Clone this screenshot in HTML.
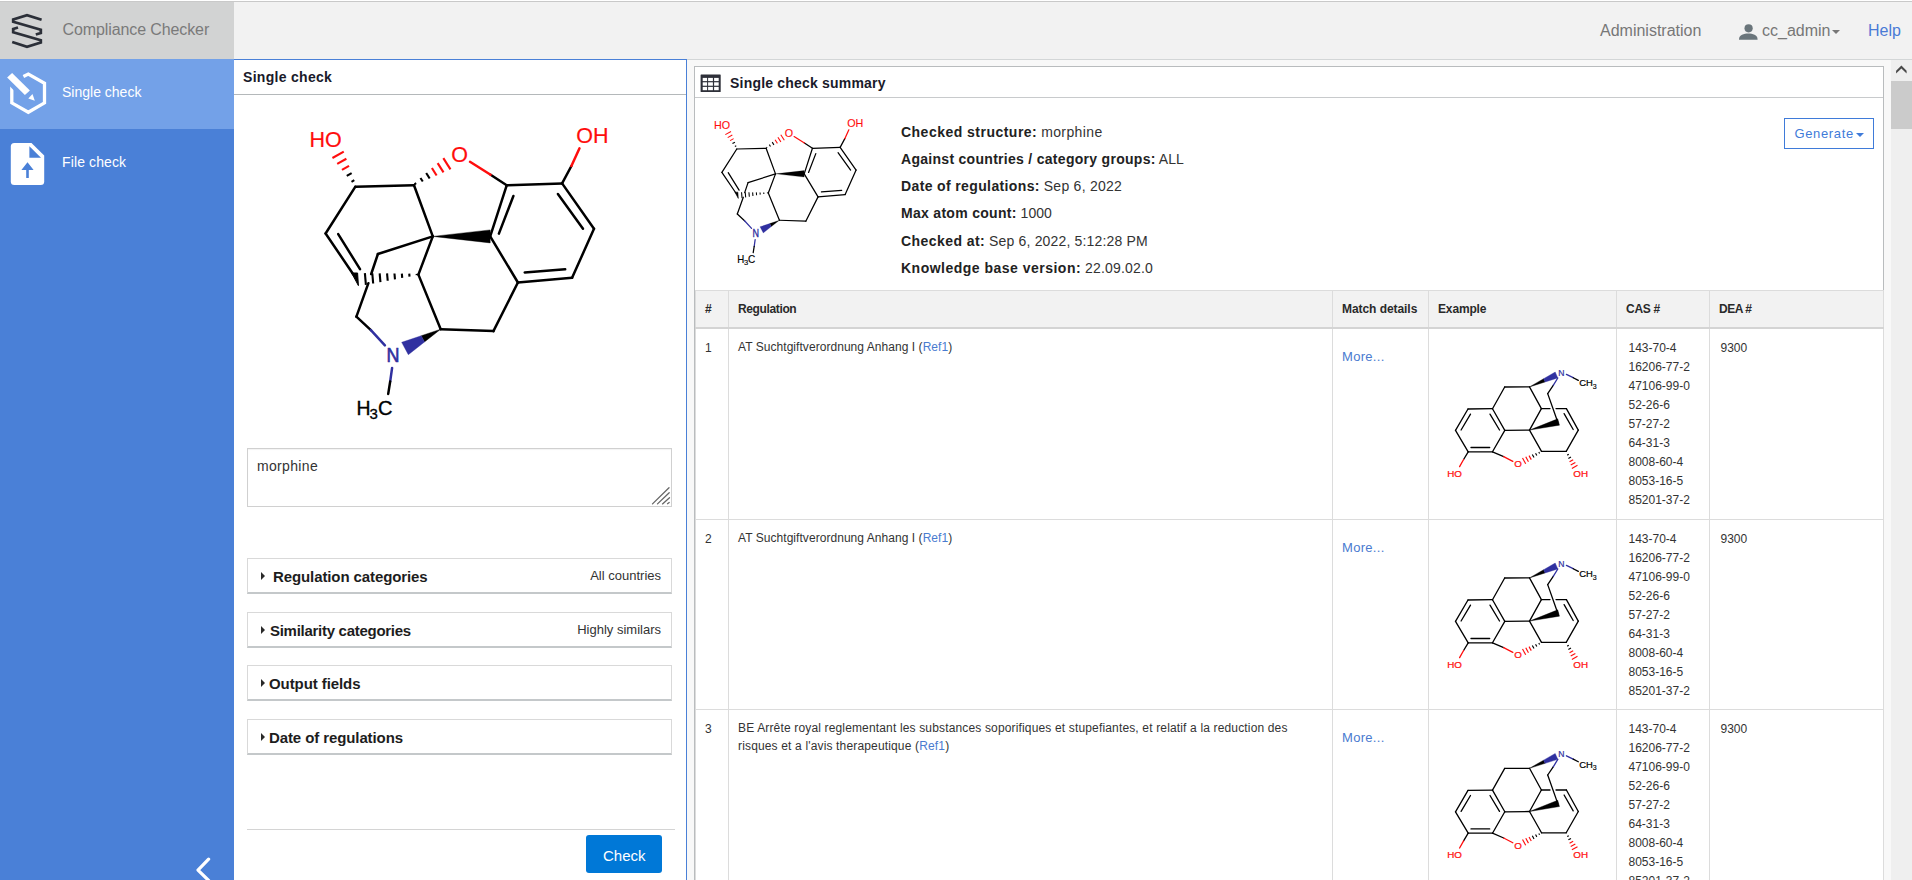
<!DOCTYPE html>
<html><head><meta charset="utf-8">
<style>
*{box-sizing:border-box;margin:0;padding:0}
html,body{width:1912px;height:880px;overflow:hidden;background:#fff;font-family:"Liberation Sans",sans-serif;color:#222}
.a{position:absolute;white-space:nowrap}
#topline{position:absolute;left:0;top:1px;width:1912px;height:1px;background:#c9c9c9}
#header{position:absolute;left:0;top:2px;width:1912px;height:57px;background:#f2f2f2}
#brand{position:absolute;left:0;top:2px;width:234px;height:57px;background:#d2d3d3}
#sidebar{position:absolute;left:0;top:59px;width:234px;height:821px;background:#4a80d7}
.navitem{position:absolute;left:0;width:234px;height:70px}
.navitem.active{background:#73a1e8}
.navitem .t{position:absolute;left:62px;font-size:14px;color:#fff;white-space:nowrap}
#leftpanel{position:absolute;left:234px;top:59px;width:453px;height:821px;border-top:1px solid #4a80d7;border-right:1px solid #4a80d7;background:#fff}
#scroll{position:absolute;left:1891px;top:60px;width:21px;height:820px;background:#efefef}
.acc{position:absolute;left:247px;width:425px;height:36px;border:1px solid #d9d9d9;border-bottom:2px solid #c4c8ca;background:#fff}
.acc .h{position:absolute;top:8.5px;font-size:15px;font-weight:bold;color:#1d1d1d}
.acc .r{position:absolute;right:10px;top:9.2px;font-size:13px;color:#333}
.acc .tri{position:absolute;left:13.2px;top:12.8px;width:0;height:0;border-top:4px solid transparent;border-bottom:4px solid transparent;border-left:4.3px solid #2a2a2a}
.prop{position:absolute;left:901px;font-size:14px;color:#333;white-space:nowrap}
.prop b{color:#222}
table{position:absolute;left:695px;top:290px;border-collapse:collapse;font-size:12px;color:#333}
th{background:#f2f2f2;font-weight:bold;text-align:left;height:37px;border:1px solid #dcdcdc;border-bottom:2px solid #d4d4d4;padding:0 9px;color:#2a2a2a}
td{vertical-align:top;border:1px solid #dcdcdc;padding:10px 9px 0 9px;line-height:18px}
td.rg{padding-top:9px}
td.md{padding-top:19px;font-size:13px}
.lnk{color:#4a7bd0}
td.md .lnk{letter-spacing:0.3px}
.cas{line-height:19px;padding-left:11.5px}
td.dea{padding-left:10.5px}
</style></head>
<body>
<div id="topline"></div>
<div id="header">
  <div class="a" style="left:1600px;top:20px;font-size:16px;color:#777">Administration</div>
  <svg class="a" style="left:1736px;top:18px" width="24" height="22" viewBox="0 0 24 22">
    <circle cx="12.6" cy="8.3" r="4.1" fill="#6a757b"/>
    <path d="M3,19.5 C3,15 8,13.6 12.3,13.6 C16.6,13.6 21.6,15 21.6,19.5 L21.6,19.8 L3,19.8 Z" fill="#6a757b"/>
  </svg>
  <div class="a" style="left:1762px;top:20px;font-size:16px;color:#777">cc_admin</div>
  <div class="a" style="left:1832.3px;top:28.3px;width:0;height:0;border-left:4px solid transparent;border-right:4px solid transparent;border-top:4.5px solid #777"></div>
  <div class="a" style="left:1868px;top:20px;font-size:16px;color:#4a7bd6">Help</div>
</div>
<div id="brand">
  <svg class="a" style="left:0;top:-2px" width="60" height="60" viewBox="0 0 60 60">
    <g fill="none" stroke="#2b2f38" stroke-width="2.75" stroke-linejoin="miter">
      <path d="M41.6,19.8 L27,15.2 L13.2,19.5 L13.2,21.8 L40.8,29.8 L40.8,33 L35.8,34.5"/>
      <path d="M18,27.5 L13.2,29 L13.2,32.3 L40.8,40.3 L40.8,42.5 L27,46.8 L12.2,42"/>
    </g>
  </svg>
  <div class="a" style="left:62.6px;top:18.8px;font-size:16px;color:#7a7a7a;letter-spacing:-0.11px">Compliance Checker</div>
</div>
<div id="sidebar">
  <div class="navitem active" style="top:0">
    <svg class="a" style="left:0;top:0" width="60" height="69" viewBox="0 59 60 69">
      <defs><clipPath id="hexclip"><polygon points="16,59 60,59 60,128 0,128 0,76.5 16,92.5"/></clipPath></defs>
      <g fill="none" stroke="#fff" stroke-width="3.3" stroke-linejoin="miter" clip-path="url(#hexclip)">
        <path d="M23.4,76.4 L28.3,74 L44.5,83.3 L44.5,102.9 L28.3,112.3 L11.8,102.9 L11.8,84"/>
      </g>
      <path d="M7.14,77.58 L12.1,72.9 L29.9,90.4 L24.9,95.1 Z" fill="#fff"/>
      <path d="M28.3,98.5 L32.5,94 L34.8,100.8 Z" fill="#fff"/>
    </svg>
    <div class="t" style="top:25px">Single check</div>
  </div>
  <div class="navitem" style="top:70px">
    <svg class="a" style="left:0;top:-1px" width="60" height="69" viewBox="0 128 60 69">
      <path d="M14.3,143 L31.5,143 L44.2,155.6 L44.2,181.5 Q44.2,185 40.7,185 L14.3,185 Q10.8,185 10.8,181.5 L10.8,146.5 Q10.8,143 14.3,143 Z" fill="#fff"/>
      <path d="M29.4,146.3 L29.4,157.8 L41,157.8 Z" fill="#4a80d7"/>
      <path d="M21.4,170 L27.5,162.2 L33.6,170 L28.8,170 L28.8,178 L26.2,178 L26.2,170 Z" fill="#4a80d7"/>
    </svg>
    <div class="t" style="top:25px;letter-spacing:0.12px">File check</div>
  </div>
  <svg class="a" style="left:190px;top:795px" width="30" height="30" viewBox="0 854 30 26">
  </svg>
</div>
<svg class="a" style="left:0;top:0" width="234" height="880" viewBox="0 0 234 880">
  <path d="M208.6,859.2 L198,870.1 L208.6,880.5" fill="none" stroke="#fff" stroke-width="3.2" stroke-linecap="round" stroke-linejoin="round"/>
</svg>

<div class="a" style="left:234px;top:59px;width:1678px;height:1px;background:#d3d6d7"></div>
<div class="a" style="left:687px;top:60px;width:1204px;height:820px;background:#f8f8f8"></div>
<div id="leftpanel"></div>
<div class="a" style="left:243px;top:69px;font-size:14px;font-weight:bold;color:#1a1a2a;letter-spacing:0.3px">Single check</div>
<div class="a" style="left:234px;top:94px;width:452px;height:1px;background:#b4b8ba"></div>

<div class="a" style="left:247px;top:448px;width:425px;height:59px;border:1px solid #d0d0d0;background:#fff;box-shadow:inset 0 1px 1px rgba(0,0,0,0.05)"></div>
<div class="a" style="left:257px;top:458px;font-size:14px;color:#333;letter-spacing:0.33px">morphine</div>
<svg class="a" style="left:650px;top:485px" width="22" height="22" viewBox="650 485 22 22">
  <g stroke="#666" stroke-width="1.3" stroke-linecap="round"><path d="M652.5,503.9 L669,487.7"/><path d="M657.5,503.9 L669.2,492.7"/><path d="M662.5,503.9 L669.5,497.7"/><path d="M667.5,503.7 L669.2,502.5"/></g>
</svg>

<div class="acc" style="top:558px"><div class="tri"></div><div class="h" style="left:25px;letter-spacing:-0.1px">Regulation categories</div><div class="r">All countries</div></div>
<div class="acc" style="top:612px"><div class="tri"></div><div class="h" style="left:22px;letter-spacing:-0.28px">Similarity categories</div><div class="r">Highly similars</div></div>
<div class="acc" style="top:665px"><div class="tri"></div><div class="h" style="left:21px;letter-spacing:-0.08px">Output fields</div></div>
<div class="acc" style="top:719px"><div class="tri"></div><div class="h" style="left:21px;letter-spacing:-0.1px">Date of regulations</div></div>

<div class="a" style="left:247px;top:829px;width:428px;height:1px;background:#d4d4d4"></div>
<div class="a" style="left:586px;top:835px;width:76px;height:38px;background:#0078d7;border-radius:3px"></div>
<div class="a" style="left:603px;top:847px;font-size:15px;color:#fff">Check</div>

<!-- right panel -->
<div class="a" style="left:694px;top:66px;width:1190px;height:830px;border:1px solid #b9bcbe;background:#fff"></div>
<div class="a" style="left:695px;top:97px;width:1188px;height:1px;background:#c8cacc"></div>
<svg class="a" style="left:700px;top:74.4px" width="22" height="20" viewBox="0 0 22 20">
  <rect x="0.6" y="0.5" width="20.1" height="17.5" rx="0.6" fill="#2e3039"/>
  <g fill="#fff"><rect x="2.7" y="3.9" width="4.4" height="3.2"/><rect x="8.1" y="3.9" width="4.8" height="3.2"/><rect x="14.1" y="3.9" width="4.6" height="3.2"/>
  <rect x="2.7" y="8.3" width="4.4" height="3.4"/><rect x="8.1" y="8.3" width="4.8" height="3.4"/><rect x="14.1" y="8.3" width="4.6" height="3.4"/>
  <rect x="2.7" y="12.9" width="4.4" height="3.3"/><rect x="8.1" y="12.9" width="4.8" height="3.3"/><rect x="14.1" y="12.9" width="4.6" height="3.3"/></g>
</svg>
<div class="a" style="left:730px;top:75.3px;font-size:14px;font-weight:bold;color:#1a1a2a;letter-spacing:0.2px">Single check summary</div>

<div class="prop" style="top:124px"><b style="letter-spacing:0.48px">Checked structure:</b> <span style="letter-spacing:0.4px">morphine</span></div>
<div class="prop" style="top:151px"><b style="letter-spacing:0.29px">Against countries / category groups:</b> ALL</div>
<div class="prop" style="top:178px"><b style="letter-spacing:0.37px">Date of regulations:</b> <span style="letter-spacing:0.26px">Sep 6, 2022</span></div>
<div class="prop" style="top:205px"><b style="letter-spacing:0.3px">Max atom count:</b> 1000</div>
<div class="prop" style="top:233px"><b style="letter-spacing:0.44px">Checked at:</b> <span style="letter-spacing:0.17px">Sep 6, 2022, 5:12:28 PM</span></div>
<div class="prop" style="top:260px"><b style="letter-spacing:0.49px">Knowledge base version:</b> <span style="letter-spacing:0.19px">22.09.02.0</span></div>

<div class="a" style="left:1784px;top:118px;width:90px;height:31px;border:1px solid #3f7bd9;background:#fff"></div>
<div class="a" style="left:1794.4px;top:126px;font-size:13px;color:#3f7bd9;letter-spacing:0.65px">Generate</div>
<div class="a" style="left:1856px;top:133px;width:0;height:0;border-left:4px solid transparent;border-right:4px solid transparent;border-top:4px solid #3f7bd9"></div>

<table>
<colgroup><col style="width:33px"><col style="width:604px"><col style="width:96px"><col style="width:188px"><col style="width:93px"><col style="width:174px"></colgroup>
<tr><th>#</th><th style="letter-spacing:-0.37px">Regulation</th><th style="letter-spacing:-0.06px">Match details</th><th style="letter-spacing:-0.15px">Example</th><th style="letter-spacing:-0.27px">CAS #</th><th style="letter-spacing:-0.48px">DEA #</th></tr>
<tr style="height:192px"><td>1</td><td class="rg" style="letter-spacing:0.05px">AT Suchtgiftverordnung Anhang I (<span class="lnk">Ref1</span>)</td><td class="md"><span class="lnk">More...</span></td><td></td><td class="cas">143-70-4<br>16206-77-2<br>47106-99-0<br>52-26-6<br>57-27-2<br>64-31-3<br>8008-60-4<br>8053-16-5<br>85201-37-2</td><td class="dea">9300</td></tr>
<tr style="height:190px"><td>2</td><td class="rg" style="letter-spacing:0.05px">AT Suchtgiftverordnung Anhang I (<span class="lnk">Ref1</span>)</td><td class="md"><span class="lnk">More...</span></td><td></td><td class="cas">143-70-4<br>16206-77-2<br>47106-99-0<br>52-26-6<br>57-27-2<br>64-31-3<br>8008-60-4<br>8053-16-5<br>85201-37-2</td><td class="dea">9300</td></tr>
<tr style="height:190px"><td>3</td><td class="rg" style="letter-spacing:0.155px">BE Arrête royal reglementant les substances soporifiques et stupefiantes, et relatif a la reduction des<br>risques et a l'avis therapeutique (<span class="lnk">Ref1</span>)</td><td class="md"><span class="lnk">More...</span></td><td></td><td class="cas">143-70-4<br>16206-77-2<br>47106-99-0<br>52-26-6<br>57-27-2<br>64-31-3<br>8008-60-4<br>8053-16-5<br>85201-37-2</td><td class="dea">9300</td></tr>
</table>

<svg class="a" style="left:0;top:0;position:absolute" width="1912" height="880" viewBox="0 0 1912 880"><g stroke="#000" stroke-width="2.5" stroke-linecap="round" fill="none"><line x1="355.4" y1="186.7" x2="414" y2="185.3" stroke="#000"/><line x1="355.4" y1="186.7" x2="325.6" y2="233.5" stroke="#000"/><line x1="325.6" y1="233.5" x2="353.2" y2="274.2" stroke="#000"/><line x1="414" y1="185.3" x2="432.8" y2="236.4" stroke="#000"/><line x1="432.8" y1="236.4" x2="418.4" y2="274.6" stroke="#000"/><line x1="432.8" y1="236.4" x2="377.9" y2="254" stroke="#000"/><line x1="440.7" y1="329.2" x2="418.4" y2="274.6" stroke="#000"/><line x1="440.7" y1="329.2" x2="493.4" y2="331.1" stroke="#000"/><line x1="493.4" y1="331.1" x2="517.9" y2="282.5" stroke="#000"/><line x1="517.9" y1="282.5" x2="490.2" y2="236.4" stroke="#000"/><line x1="517.9" y1="282.5" x2="572.1" y2="277.8" stroke="#000"/><line x1="572.1" y1="277.8" x2="594" y2="228.8" stroke="#000"/><line x1="594" y1="228.8" x2="562.1" y2="183.4" stroke="#000"/><line x1="562.1" y1="183.4" x2="506.7" y2="185.3" stroke="#000"/><line x1="506.7" y1="185.3" x2="490.2" y2="236.4" stroke="#000"/><line x1="377.9" y1="254" x2="371.2" y2="274" stroke="#000"/><line x1="368.4" y1="283.2" x2="356.4" y2="316.7" stroke="#000"/><line x1="338.2" y1="234.1" x2="360" y2="269.1" stroke="#000"/><line x1="524.7" y1="272.5" x2="565.2" y2="269.3" stroke="#000"/><line x1="583" y1="228.8" x2="557.9" y2="194" stroke="#000"/><line x1="513.4" y1="196" x2="498.9" y2="233.6" stroke="#000"/><line x1="356.4" y1="316.7" x2="370.9" y2="330.2" stroke="#000"/><line x1="370.9" y1="330.2" x2="384.9" y2="345.3" stroke="#3030a0"/><line x1="392.1" y1="367.9" x2="390.2" y2="381.4" stroke="#3030a0"/><line x1="390.2" y1="381.4" x2="388.2" y2="393.9" stroke="#000"/><line x1="506.7" y1="185.3" x2="490.6" y2="174.7" stroke="#000"/><line x1="490.6" y1="174.7" x2="470" y2="161.8" stroke="#ff0d0d"/><line x1="562.1" y1="183.4" x2="571.4" y2="166" stroke="#000"/><line x1="571.4" y1="166" x2="579.5" y2="148.3" stroke="#ff0d0d"/></g><polygon points="432.8,236.4 490.2,242.9 490.2,229.9 432.8,236.4" fill="#000" stroke="#000" stroke-width="0.4" stroke-linejoin="miter"/><polygon points="440.7,329.2 421.19,335.77 424.51,341.93 440.7,329.2" fill="#000" stroke="#000" stroke-width="0.4" stroke-linejoin="miter"/><polygon points="421.19,335.77 401.67,342.34 408.33,354.66 424.51,341.93" fill="#3030a0" stroke="#3030a0" stroke-width="0.4" stroke-linejoin="miter"/><line x1="415.83" y1="184.59" x2="414.77" y2="182.91" stroke="#000" stroke-width="2.1" stroke-linecap="butt"/><line x1="422.76" y1="181.55" x2="420.48" y2="177.95" stroke="#000" stroke-width="2.1" stroke-linecap="butt"/><line x1="429.68" y1="178.5" x2="426.2" y2="173" stroke="#000" stroke-width="2.1" stroke-linecap="butt"/><line x1="436.61" y1="175.46" x2="431.91" y2="168.04" stroke="#ff0d0d" stroke-width="2.1" stroke-linecap="butt"/><line x1="443.53" y1="172.41" x2="437.63" y2="163.09" stroke="#ff0d0d" stroke-width="2.1" stroke-linecap="butt"/><line x1="450.46" y1="169.37" x2="443.34" y2="158.13" stroke="#ff0d0d" stroke-width="2.1" stroke-linecap="butt"/><line x1="354.29" y1="180.21" x2="351.51" y2="181.79" stroke="#000" stroke-width="2.1" stroke-linecap="butt"/><line x1="351.66" y1="173.06" x2="346.74" y2="175.84" stroke="#000" stroke-width="2.1" stroke-linecap="butt"/><line x1="349.03" y1="165.91" x2="341.97" y2="169.89" stroke="#ff0d0d" stroke-width="2.1" stroke-linecap="butt"/><line x1="346.39" y1="158.76" x2="337.21" y2="163.94" stroke="#ff0d0d" stroke-width="2.1" stroke-linecap="butt"/><line x1="343.76" y1="151.6" x2="332.44" y2="158" stroke="#ff0d0d" stroke-width="2.1" stroke-linecap="butt"/><line x1="416.64" y1="273.8" x2="416.76" y2="275.2" stroke="#000" stroke-width="2.1" stroke-linecap="butt"/><line x1="409.25" y1="273.71" x2="409.5" y2="276.58" stroke="#000" stroke-width="2.1" stroke-linecap="butt"/><line x1="401.85" y1="273.61" x2="402.23" y2="277.96" stroke="#000" stroke-width="2.1" stroke-linecap="butt"/><line x1="394.46" y1="273.51" x2="394.97" y2="279.35" stroke="#000" stroke-width="2.1" stroke-linecap="butt"/><line x1="387.06" y1="273.41" x2="387.71" y2="280.73" stroke="#000" stroke-width="2.1" stroke-linecap="butt"/><line x1="379.67" y1="273.32" x2="380.44" y2="282.11" stroke="#000" stroke-width="2.1" stroke-linecap="butt"/><line x1="372.28" y1="273.22" x2="373.18" y2="283.49" stroke="#000" stroke-width="2.1" stroke-linecap="butt"/><line x1="364.88" y1="273.12" x2="365.92" y2="284.88" stroke="#000" stroke-width="2.1" stroke-linecap="butt"/><polygon points="351.6,273 357.6,273 358.4,285.6" fill="#000" stroke="#000" stroke-width="1" stroke-linejoin="round"/><text x="309.6" y="147.1" font-family="Liberation Sans" font-size="21.5" fill="#ff0d0d" stroke="#ff0d0d" stroke-width="0.2">HO</text><text x="576.3" y="143.4" font-family="Liberation Sans" font-size="21.5" fill="#ff0d0d" stroke="#ff0d0d" stroke-width="0.2">OH</text><text x="451.3" y="162.4" font-family="Liberation Sans" font-size="21.5" fill="#ff0d0d" stroke="#ff0d0d" stroke-width="0.2">O</text><text x="386.6" y="361.8" font-family="Liberation Sans" font-size="21" fill="#3030a0" stroke="#3030a0" stroke-width="0.65" textLength="13" lengthAdjust="spacingAndGlyphs">N</text><text x="356.4" y="415.2" font-family="Liberation Sans" font-size="21" fill="#000" stroke="#000" stroke-width="0.35" textLength="14" lengthAdjust="spacingAndGlyphs">H</text><text x="369.6" y="419.1" font-family="Liberation Sans" font-size="15" fill="#000" stroke="#000" stroke-width="0.3">3</text><text x="378" y="415.3" font-family="Liberation Sans" font-size="21" fill="#000" stroke="#000" stroke-width="0.35" textLength="14.5" lengthAdjust="spacingAndGlyphs">C</text><g transform="translate(559.1,55.65) scale(0.5)"><g stroke="#000" stroke-width="2.5" stroke-linecap="round" fill="none"><line x1="355.4" y1="186.7" x2="414" y2="185.3" stroke="#000"/><line x1="355.4" y1="186.7" x2="325.6" y2="233.5" stroke="#000"/><line x1="325.6" y1="233.5" x2="353.2" y2="274.2" stroke="#000"/><line x1="414" y1="185.3" x2="432.8" y2="236.4" stroke="#000"/><line x1="432.8" y1="236.4" x2="418.4" y2="274.6" stroke="#000"/><line x1="432.8" y1="236.4" x2="377.9" y2="254" stroke="#000"/><line x1="440.7" y1="329.2" x2="418.4" y2="274.6" stroke="#000"/><line x1="440.7" y1="329.2" x2="493.4" y2="331.1" stroke="#000"/><line x1="493.4" y1="331.1" x2="517.9" y2="282.5" stroke="#000"/><line x1="517.9" y1="282.5" x2="490.2" y2="236.4" stroke="#000"/><line x1="517.9" y1="282.5" x2="572.1" y2="277.8" stroke="#000"/><line x1="572.1" y1="277.8" x2="594" y2="228.8" stroke="#000"/><line x1="594" y1="228.8" x2="562.1" y2="183.4" stroke="#000"/><line x1="562.1" y1="183.4" x2="506.7" y2="185.3" stroke="#000"/><line x1="506.7" y1="185.3" x2="490.2" y2="236.4" stroke="#000"/><line x1="377.9" y1="254" x2="371.2" y2="274" stroke="#000"/><line x1="368.4" y1="283.2" x2="356.4" y2="316.7" stroke="#000"/><line x1="338.2" y1="234.1" x2="360" y2="269.1" stroke="#000"/><line x1="524.7" y1="272.5" x2="565.2" y2="269.3" stroke="#000"/><line x1="583" y1="228.8" x2="557.9" y2="194" stroke="#000"/><line x1="513.4" y1="196" x2="498.9" y2="233.6" stroke="#000"/><line x1="356.4" y1="316.7" x2="370.9" y2="330.2" stroke="#000"/><line x1="370.9" y1="330.2" x2="384.9" y2="345.3" stroke="#3030a0"/><line x1="392.1" y1="367.9" x2="390.2" y2="381.4" stroke="#3030a0"/><line x1="390.2" y1="381.4" x2="388.2" y2="393.9" stroke="#000"/><line x1="506.7" y1="185.3" x2="490.6" y2="174.7" stroke="#000"/><line x1="490.6" y1="174.7" x2="470" y2="161.8" stroke="#ff0d0d"/><line x1="562.1" y1="183.4" x2="571.4" y2="166" stroke="#000"/><line x1="571.4" y1="166" x2="579.5" y2="148.3" stroke="#ff0d0d"/></g><polygon points="432.8,236.4 490.2,242.9 490.2,229.9 432.8,236.4" fill="#000" stroke="#000" stroke-width="0.4" stroke-linejoin="miter"/><polygon points="440.7,329.2 421.19,335.77 424.51,341.93 440.7,329.2" fill="#000" stroke="#000" stroke-width="0.4" stroke-linejoin="miter"/><polygon points="421.19,335.77 401.67,342.34 408.33,354.66 424.51,341.93" fill="#3030a0" stroke="#3030a0" stroke-width="0.4" stroke-linejoin="miter"/><line x1="415.83" y1="184.59" x2="414.77" y2="182.91" stroke="#000" stroke-width="2.1" stroke-linecap="butt"/><line x1="422.76" y1="181.55" x2="420.48" y2="177.95" stroke="#000" stroke-width="2.1" stroke-linecap="butt"/><line x1="429.68" y1="178.5" x2="426.2" y2="173" stroke="#000" stroke-width="2.1" stroke-linecap="butt"/><line x1="436.61" y1="175.46" x2="431.91" y2="168.04" stroke="#ff0d0d" stroke-width="2.1" stroke-linecap="butt"/><line x1="443.53" y1="172.41" x2="437.63" y2="163.09" stroke="#ff0d0d" stroke-width="2.1" stroke-linecap="butt"/><line x1="450.46" y1="169.37" x2="443.34" y2="158.13" stroke="#ff0d0d" stroke-width="2.1" stroke-linecap="butt"/><line x1="354.29" y1="180.21" x2="351.51" y2="181.79" stroke="#000" stroke-width="2.1" stroke-linecap="butt"/><line x1="351.66" y1="173.06" x2="346.74" y2="175.84" stroke="#000" stroke-width="2.1" stroke-linecap="butt"/><line x1="349.03" y1="165.91" x2="341.97" y2="169.89" stroke="#ff0d0d" stroke-width="2.1" stroke-linecap="butt"/><line x1="346.39" y1="158.76" x2="337.21" y2="163.94" stroke="#ff0d0d" stroke-width="2.1" stroke-linecap="butt"/><line x1="343.76" y1="151.6" x2="332.44" y2="158" stroke="#ff0d0d" stroke-width="2.1" stroke-linecap="butt"/><line x1="416.64" y1="273.8" x2="416.76" y2="275.2" stroke="#000" stroke-width="2.1" stroke-linecap="butt"/><line x1="409.25" y1="273.71" x2="409.5" y2="276.58" stroke="#000" stroke-width="2.1" stroke-linecap="butt"/><line x1="401.85" y1="273.61" x2="402.23" y2="277.96" stroke="#000" stroke-width="2.1" stroke-linecap="butt"/><line x1="394.46" y1="273.51" x2="394.97" y2="279.35" stroke="#000" stroke-width="2.1" stroke-linecap="butt"/><line x1="387.06" y1="273.41" x2="387.71" y2="280.73" stroke="#000" stroke-width="2.1" stroke-linecap="butt"/><line x1="379.67" y1="273.32" x2="380.44" y2="282.11" stroke="#000" stroke-width="2.1" stroke-linecap="butt"/><line x1="372.28" y1="273.22" x2="373.18" y2="283.49" stroke="#000" stroke-width="2.1" stroke-linecap="butt"/><line x1="364.88" y1="273.12" x2="365.92" y2="284.88" stroke="#000" stroke-width="2.1" stroke-linecap="butt"/><polygon points="351.6,273 357.6,273 358.4,285.6" fill="#000" stroke="#000" stroke-width="1" stroke-linejoin="round"/><text x="309.6" y="147.1" font-family="Liberation Sans" font-size="21.5" fill="#ff0d0d" stroke="#ff0d0d" stroke-width="0.2">HO</text><text x="576.3" y="143.4" font-family="Liberation Sans" font-size="21.5" fill="#ff0d0d" stroke="#ff0d0d" stroke-width="0.2">OH</text><text x="451.3" y="162.4" font-family="Liberation Sans" font-size="21.5" fill="#ff0d0d" stroke="#ff0d0d" stroke-width="0.2">O</text><text x="386.6" y="361.8" font-family="Liberation Sans" font-size="21" fill="#3030a0" stroke="#3030a0" stroke-width="0.65" textLength="13" lengthAdjust="spacingAndGlyphs">N</text><text x="356.4" y="415.2" font-family="Liberation Sans" font-size="21" fill="#000" stroke="#000" stroke-width="0.35" textLength="14" lengthAdjust="spacingAndGlyphs">H</text><text x="369.6" y="419.1" font-family="Liberation Sans" font-size="15" fill="#000" stroke="#000" stroke-width="0.3">3</text><text x="378" y="415.3" font-family="Liberation Sans" font-size="21" fill="#000" stroke="#000" stroke-width="0.35" textLength="14.5" lengthAdjust="spacingAndGlyphs">C</text></g><g stroke="#000" stroke-width="1.3" stroke-linecap="round" fill="none"><line x1="1529.5" y1="386.9" x2="1504.7" y2="387" stroke="#000"/><line x1="1504.7" y1="387" x2="1492.5" y2="408.7" stroke="#000"/><line x1="1492.5" y1="408.7" x2="1468" y2="409" stroke="#000"/><line x1="1468" y1="409" x2="1455.5" y2="430.4" stroke="#000"/><line x1="1455.5" y1="430.4" x2="1468.2" y2="451.8" stroke="#000"/><line x1="1468.2" y1="451.8" x2="1492.5" y2="451.8" stroke="#000"/><line x1="1492.5" y1="451.8" x2="1504.8" y2="430.4" stroke="#000"/><line x1="1504.8" y1="430.4" x2="1492.5" y2="408.7" stroke="#000"/><line x1="1504.8" y1="430.4" x2="1529.5" y2="430.1" stroke="#000"/><line x1="1529.5" y1="430.1" x2="1541.4" y2="408.6" stroke="#000"/><line x1="1541.4" y1="408.6" x2="1529.5" y2="386.9" stroke="#000"/><line x1="1566.4" y1="408.6" x2="1578.3" y2="430.1" stroke="#000"/><line x1="1578.3" y1="430.1" x2="1566.2" y2="451.4" stroke="#000"/><line x1="1566.2" y1="451.4" x2="1541.5" y2="451.4" stroke="#000"/><line x1="1541.5" y1="451.4" x2="1529.5" y2="430.1" stroke="#000"/><line x1="1557.9" y1="422.5" x2="1547.7" y2="393.6" stroke="#000"/><line x1="1541.4" y1="408.6" x2="1550" y2="408.6" stroke="#000"/><line x1="1556" y1="408.6" x2="1566.4" y2="408.6" stroke="#000"/><line x1="1470.5" y1="414.1" x2="1461.1" y2="430" stroke="#000"/><line x1="1471" y1="447.5" x2="1489.7" y2="447.5" stroke="#000"/><line x1="1490" y1="414.1" x2="1499.5" y2="430" stroke="#000"/><line x1="1564.1" y1="413.6" x2="1573.2" y2="429.5" stroke="#000"/><line x1="1547.7" y1="393.6" x2="1553.4" y2="385.2" stroke="#000"/><line x1="1553.4" y1="385.2" x2="1557.8" y2="378" stroke="#3030a0"/><line x1="1566.4" y1="374.4" x2="1573.2" y2="377.7" stroke="#3030a0"/><line x1="1573.2" y1="377.7" x2="1578.3" y2="380.4" stroke="#000"/><line x1="1468.2" y1="451.8" x2="1463.6" y2="459.5" stroke="#000"/><line x1="1463.6" y1="459.5" x2="1459.6" y2="466.6" stroke="#ff0d0d"/><line x1="1492.5" y1="451.8" x2="1503.7" y2="456.6" stroke="#000"/><line x1="1503.7" y1="456.6" x2="1512.8" y2="461.4" stroke="#ff0d0d"/></g><polygon points="1529.5,430.1 1559.47,425.13 1557.73,418.87 1529.5,430.1" fill="#000" stroke="#000" stroke-width="0.4" stroke-linejoin="miter"/><polygon points="1529.5,386.9 1545.06,381.97 1543.64,378.74 1529.5,386.9" fill="#000" stroke="#000" stroke-width="0.4" stroke-linejoin="miter"/><polygon points="1545.06,381.97 1557.79,377.93 1555.21,372.07 1543.64,378.74" fill="#3030a0" stroke="#3030a0" stroke-width="0.4" stroke-linejoin="miter"/><line x1="1538.82" y1="452" x2="1539.58" y2="453.4" stroke="#000" stroke-width="1.15" stroke-linecap="butt"/><line x1="1535.56" y1="453.2" x2="1536.8" y2="455.48" stroke="#000" stroke-width="1.15" stroke-linecap="butt"/><line x1="1532.3" y1="454.4" x2="1534.02" y2="457.56" stroke="#000" stroke-width="1.15" stroke-linecap="butt"/><line x1="1529.04" y1="455.6" x2="1531.24" y2="459.64" stroke="#ff0d0d" stroke-width="1.15" stroke-linecap="butt"/><line x1="1525.78" y1="456.8" x2="1528.46" y2="461.72" stroke="#ff0d0d" stroke-width="1.15" stroke-linecap="butt"/><line x1="1522.53" y1="458" x2="1525.67" y2="463.8" stroke="#ff0d0d" stroke-width="1.15" stroke-linecap="butt"/><line x1="1567.21" y1="455.13" x2="1568.79" y2="454.27" stroke="#000" stroke-width="1.15" stroke-linecap="butt"/><line x1="1568.38" y1="458.46" x2="1570.97" y2="457.04" stroke="#000" stroke-width="1.15" stroke-linecap="butt"/><line x1="1569.55" y1="461.79" x2="1573.15" y2="459.81" stroke="#ff0d0d" stroke-width="1.15" stroke-linecap="butt"/><line x1="1570.72" y1="465.11" x2="1575.33" y2="462.59" stroke="#ff0d0d" stroke-width="1.15" stroke-linecap="butt"/><line x1="1571.9" y1="468.44" x2="1577.5" y2="465.36" stroke="#ff0d0d" stroke-width="1.15" stroke-linecap="butt"/><text x="1447.3" y="476.9" font-family="Liberation Sans" font-size="9.8" fill="#ff0d0d" stroke="#ff0d0d" stroke-width="0.22">HO</text><text x="1573.3" y="476.5" font-family="Liberation Sans" font-size="9.8" fill="#ff0d0d" stroke="#ff0d0d" stroke-width="0.22">OH</text><text x="1514.3" y="467.4" font-family="Liberation Sans" font-size="9.8" fill="#ff0d0d" stroke="#ff0d0d" stroke-width="0.22">O</text><text x="1558.3" y="375.8" font-family="Liberation Sans" font-size="9.1" fill="#3030a0" stroke="#3030a0" stroke-width="0.22" textLength="6.2" lengthAdjust="spacingAndGlyphs">N</text><text x="1579.2" y="386.4" font-family="Liberation Sans" font-size="9.8" fill="#000" stroke="#000" stroke-width="0.22" textLength="13.6" lengthAdjust="spacingAndGlyphs">CH</text><text x="1592.8" y="388.6" font-family="Liberation Sans" font-size="7" fill="#000" stroke="#000" stroke-width="0.15">3</text><g transform="translate(0,191)"><g stroke="#000" stroke-width="1.3" stroke-linecap="round" fill="none"><line x1="1529.5" y1="386.9" x2="1504.7" y2="387" stroke="#000"/><line x1="1504.7" y1="387" x2="1492.5" y2="408.7" stroke="#000"/><line x1="1492.5" y1="408.7" x2="1468" y2="409" stroke="#000"/><line x1="1468" y1="409" x2="1455.5" y2="430.4" stroke="#000"/><line x1="1455.5" y1="430.4" x2="1468.2" y2="451.8" stroke="#000"/><line x1="1468.2" y1="451.8" x2="1492.5" y2="451.8" stroke="#000"/><line x1="1492.5" y1="451.8" x2="1504.8" y2="430.4" stroke="#000"/><line x1="1504.8" y1="430.4" x2="1492.5" y2="408.7" stroke="#000"/><line x1="1504.8" y1="430.4" x2="1529.5" y2="430.1" stroke="#000"/><line x1="1529.5" y1="430.1" x2="1541.4" y2="408.6" stroke="#000"/><line x1="1541.4" y1="408.6" x2="1529.5" y2="386.9" stroke="#000"/><line x1="1566.4" y1="408.6" x2="1578.3" y2="430.1" stroke="#000"/><line x1="1578.3" y1="430.1" x2="1566.2" y2="451.4" stroke="#000"/><line x1="1566.2" y1="451.4" x2="1541.5" y2="451.4" stroke="#000"/><line x1="1541.5" y1="451.4" x2="1529.5" y2="430.1" stroke="#000"/><line x1="1557.9" y1="422.5" x2="1547.7" y2="393.6" stroke="#000"/><line x1="1541.4" y1="408.6" x2="1550" y2="408.6" stroke="#000"/><line x1="1556" y1="408.6" x2="1566.4" y2="408.6" stroke="#000"/><line x1="1470.5" y1="414.1" x2="1461.1" y2="430" stroke="#000"/><line x1="1471" y1="447.5" x2="1489.7" y2="447.5" stroke="#000"/><line x1="1490" y1="414.1" x2="1499.5" y2="430" stroke="#000"/><line x1="1564.1" y1="413.6" x2="1573.2" y2="429.5" stroke="#000"/><line x1="1547.7" y1="393.6" x2="1553.4" y2="385.2" stroke="#000"/><line x1="1553.4" y1="385.2" x2="1557.8" y2="378" stroke="#3030a0"/><line x1="1566.4" y1="374.4" x2="1573.2" y2="377.7" stroke="#3030a0"/><line x1="1573.2" y1="377.7" x2="1578.3" y2="380.4" stroke="#000"/><line x1="1468.2" y1="451.8" x2="1463.6" y2="459.5" stroke="#000"/><line x1="1463.6" y1="459.5" x2="1459.6" y2="466.6" stroke="#ff0d0d"/><line x1="1492.5" y1="451.8" x2="1503.7" y2="456.6" stroke="#000"/><line x1="1503.7" y1="456.6" x2="1512.8" y2="461.4" stroke="#ff0d0d"/></g><polygon points="1529.5,430.1 1559.47,425.13 1557.73,418.87 1529.5,430.1" fill="#000" stroke="#000" stroke-width="0.4" stroke-linejoin="miter"/><polygon points="1529.5,386.9 1545.06,381.97 1543.64,378.74 1529.5,386.9" fill="#000" stroke="#000" stroke-width="0.4" stroke-linejoin="miter"/><polygon points="1545.06,381.97 1557.79,377.93 1555.21,372.07 1543.64,378.74" fill="#3030a0" stroke="#3030a0" stroke-width="0.4" stroke-linejoin="miter"/><line x1="1538.82" y1="452" x2="1539.58" y2="453.4" stroke="#000" stroke-width="1.15" stroke-linecap="butt"/><line x1="1535.56" y1="453.2" x2="1536.8" y2="455.48" stroke="#000" stroke-width="1.15" stroke-linecap="butt"/><line x1="1532.3" y1="454.4" x2="1534.02" y2="457.56" stroke="#000" stroke-width="1.15" stroke-linecap="butt"/><line x1="1529.04" y1="455.6" x2="1531.24" y2="459.64" stroke="#ff0d0d" stroke-width="1.15" stroke-linecap="butt"/><line x1="1525.78" y1="456.8" x2="1528.46" y2="461.72" stroke="#ff0d0d" stroke-width="1.15" stroke-linecap="butt"/><line x1="1522.53" y1="458" x2="1525.67" y2="463.8" stroke="#ff0d0d" stroke-width="1.15" stroke-linecap="butt"/><line x1="1567.21" y1="455.13" x2="1568.79" y2="454.27" stroke="#000" stroke-width="1.15" stroke-linecap="butt"/><line x1="1568.38" y1="458.46" x2="1570.97" y2="457.04" stroke="#000" stroke-width="1.15" stroke-linecap="butt"/><line x1="1569.55" y1="461.79" x2="1573.15" y2="459.81" stroke="#ff0d0d" stroke-width="1.15" stroke-linecap="butt"/><line x1="1570.72" y1="465.11" x2="1575.33" y2="462.59" stroke="#ff0d0d" stroke-width="1.15" stroke-linecap="butt"/><line x1="1571.9" y1="468.44" x2="1577.5" y2="465.36" stroke="#ff0d0d" stroke-width="1.15" stroke-linecap="butt"/><text x="1447.3" y="476.9" font-family="Liberation Sans" font-size="9.8" fill="#ff0d0d" stroke="#ff0d0d" stroke-width="0.22">HO</text><text x="1573.3" y="476.5" font-family="Liberation Sans" font-size="9.8" fill="#ff0d0d" stroke="#ff0d0d" stroke-width="0.22">OH</text><text x="1514.3" y="467.4" font-family="Liberation Sans" font-size="9.8" fill="#ff0d0d" stroke="#ff0d0d" stroke-width="0.22">O</text><text x="1558.3" y="375.8" font-family="Liberation Sans" font-size="9.1" fill="#3030a0" stroke="#3030a0" stroke-width="0.22" textLength="6.2" lengthAdjust="spacingAndGlyphs">N</text><text x="1579.2" y="386.4" font-family="Liberation Sans" font-size="9.8" fill="#000" stroke="#000" stroke-width="0.22" textLength="13.6" lengthAdjust="spacingAndGlyphs">CH</text><text x="1592.8" y="388.6" font-family="Liberation Sans" font-size="7" fill="#000" stroke="#000" stroke-width="0.15">3</text></g><g transform="translate(0,381.4)"><g stroke="#000" stroke-width="1.3" stroke-linecap="round" fill="none"><line x1="1529.5" y1="386.9" x2="1504.7" y2="387" stroke="#000"/><line x1="1504.7" y1="387" x2="1492.5" y2="408.7" stroke="#000"/><line x1="1492.5" y1="408.7" x2="1468" y2="409" stroke="#000"/><line x1="1468" y1="409" x2="1455.5" y2="430.4" stroke="#000"/><line x1="1455.5" y1="430.4" x2="1468.2" y2="451.8" stroke="#000"/><line x1="1468.2" y1="451.8" x2="1492.5" y2="451.8" stroke="#000"/><line x1="1492.5" y1="451.8" x2="1504.8" y2="430.4" stroke="#000"/><line x1="1504.8" y1="430.4" x2="1492.5" y2="408.7" stroke="#000"/><line x1="1504.8" y1="430.4" x2="1529.5" y2="430.1" stroke="#000"/><line x1="1529.5" y1="430.1" x2="1541.4" y2="408.6" stroke="#000"/><line x1="1541.4" y1="408.6" x2="1529.5" y2="386.9" stroke="#000"/><line x1="1566.4" y1="408.6" x2="1578.3" y2="430.1" stroke="#000"/><line x1="1578.3" y1="430.1" x2="1566.2" y2="451.4" stroke="#000"/><line x1="1566.2" y1="451.4" x2="1541.5" y2="451.4" stroke="#000"/><line x1="1541.5" y1="451.4" x2="1529.5" y2="430.1" stroke="#000"/><line x1="1557.9" y1="422.5" x2="1547.7" y2="393.6" stroke="#000"/><line x1="1541.4" y1="408.6" x2="1550" y2="408.6" stroke="#000"/><line x1="1556" y1="408.6" x2="1566.4" y2="408.6" stroke="#000"/><line x1="1470.5" y1="414.1" x2="1461.1" y2="430" stroke="#000"/><line x1="1471" y1="447.5" x2="1489.7" y2="447.5" stroke="#000"/><line x1="1490" y1="414.1" x2="1499.5" y2="430" stroke="#000"/><line x1="1564.1" y1="413.6" x2="1573.2" y2="429.5" stroke="#000"/><line x1="1547.7" y1="393.6" x2="1553.4" y2="385.2" stroke="#000"/><line x1="1553.4" y1="385.2" x2="1557.8" y2="378" stroke="#3030a0"/><line x1="1566.4" y1="374.4" x2="1573.2" y2="377.7" stroke="#3030a0"/><line x1="1573.2" y1="377.7" x2="1578.3" y2="380.4" stroke="#000"/><line x1="1468.2" y1="451.8" x2="1463.6" y2="459.5" stroke="#000"/><line x1="1463.6" y1="459.5" x2="1459.6" y2="466.6" stroke="#ff0d0d"/><line x1="1492.5" y1="451.8" x2="1503.7" y2="456.6" stroke="#000"/><line x1="1503.7" y1="456.6" x2="1512.8" y2="461.4" stroke="#ff0d0d"/></g><polygon points="1529.5,430.1 1559.47,425.13 1557.73,418.87 1529.5,430.1" fill="#000" stroke="#000" stroke-width="0.4" stroke-linejoin="miter"/><polygon points="1529.5,386.9 1545.06,381.97 1543.64,378.74 1529.5,386.9" fill="#000" stroke="#000" stroke-width="0.4" stroke-linejoin="miter"/><polygon points="1545.06,381.97 1557.79,377.93 1555.21,372.07 1543.64,378.74" fill="#3030a0" stroke="#3030a0" stroke-width="0.4" stroke-linejoin="miter"/><line x1="1538.82" y1="452" x2="1539.58" y2="453.4" stroke="#000" stroke-width="1.15" stroke-linecap="butt"/><line x1="1535.56" y1="453.2" x2="1536.8" y2="455.48" stroke="#000" stroke-width="1.15" stroke-linecap="butt"/><line x1="1532.3" y1="454.4" x2="1534.02" y2="457.56" stroke="#000" stroke-width="1.15" stroke-linecap="butt"/><line x1="1529.04" y1="455.6" x2="1531.24" y2="459.64" stroke="#ff0d0d" stroke-width="1.15" stroke-linecap="butt"/><line x1="1525.78" y1="456.8" x2="1528.46" y2="461.72" stroke="#ff0d0d" stroke-width="1.15" stroke-linecap="butt"/><line x1="1522.53" y1="458" x2="1525.67" y2="463.8" stroke="#ff0d0d" stroke-width="1.15" stroke-linecap="butt"/><line x1="1567.21" y1="455.13" x2="1568.79" y2="454.27" stroke="#000" stroke-width="1.15" stroke-linecap="butt"/><line x1="1568.38" y1="458.46" x2="1570.97" y2="457.04" stroke="#000" stroke-width="1.15" stroke-linecap="butt"/><line x1="1569.55" y1="461.79" x2="1573.15" y2="459.81" stroke="#ff0d0d" stroke-width="1.15" stroke-linecap="butt"/><line x1="1570.72" y1="465.11" x2="1575.33" y2="462.59" stroke="#ff0d0d" stroke-width="1.15" stroke-linecap="butt"/><line x1="1571.9" y1="468.44" x2="1577.5" y2="465.36" stroke="#ff0d0d" stroke-width="1.15" stroke-linecap="butt"/><text x="1447.3" y="476.9" font-family="Liberation Sans" font-size="9.8" fill="#ff0d0d" stroke="#ff0d0d" stroke-width="0.22">HO</text><text x="1573.3" y="476.5" font-family="Liberation Sans" font-size="9.8" fill="#ff0d0d" stroke="#ff0d0d" stroke-width="0.22">OH</text><text x="1514.3" y="467.4" font-family="Liberation Sans" font-size="9.8" fill="#ff0d0d" stroke="#ff0d0d" stroke-width="0.22">O</text><text x="1558.3" y="375.8" font-family="Liberation Sans" font-size="9.1" fill="#3030a0" stroke="#3030a0" stroke-width="0.22" textLength="6.2" lengthAdjust="spacingAndGlyphs">N</text><text x="1579.2" y="386.4" font-family="Liberation Sans" font-size="9.8" fill="#000" stroke="#000" stroke-width="0.22" textLength="13.6" lengthAdjust="spacingAndGlyphs">CH</text><text x="1592.8" y="388.6" font-family="Liberation Sans" font-size="7" fill="#000" stroke="#000" stroke-width="0.15">3</text></g></svg>
<div id="scroll">
  <svg class="a" style="left:0;top:-1px" width="21" height="22" viewBox="0 0 21 22"><path d="M5.1,11.7 L10.4,6.5 L15.6,11.7 L15.6,14.6 L10.4,9.6 L5.1,14.6 Z" fill="#4a4a4a"/></svg>
  <div class="a" style="left:0;top:21px;width:21px;height:48px;background:#cbcbcb"></div>
</div>
</body></html>
